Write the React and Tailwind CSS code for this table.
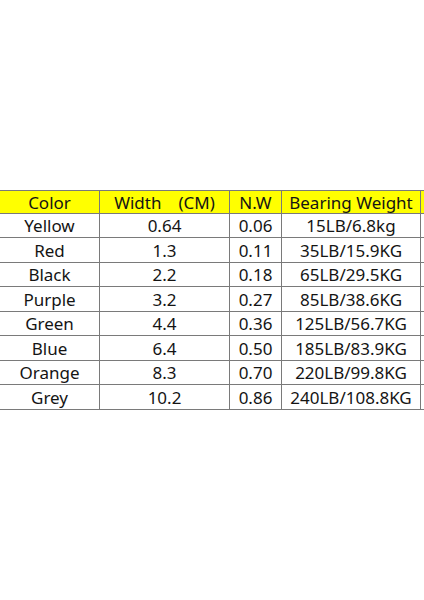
export default function App() {
  const rows = [
    ["Yellow", "0.64", "0.06", "15LB/6.8kg"],
    ["Red", "1.3", "0.11", "35LB/15.9KG"],
    ["Black", "2.2", "0.18", "65LB/29.5KG"],
    ["Purple", "3.2", "0.27", "85LB/38.6KG"],
    ["Green", "4.4", "0.36", "125LB/56.7KG"],
    ["Blue", "6.4", "0.50", "185LB/83.9KG"],
    ["Orange", "8.3", "0.70", "220LB/99.8KG"],
    ["Grey", "10.2", "0.86", "240LB/108.8KG"],
  ];
  const cell = "border border-[#7a7a7a] p-0 text-center leading-none";

  return (
    <div
      className="h-[600px] w-[424px] overflow-hidden bg-white pt-[190px] text-[17px] text-[#141414]"
      style={{ fontFamily: '"Noto Sans", "Open Sans", sans-serif' }}
    >
      <table className="ml-[-1px] border-collapse table-fixed w-[436px]">
        <colgroup>
          <col className="w-[100px]" />
          <col className="w-[130px]" />
          <col className="w-[52px]" />
          <col className="w-[139px]" />
          <col className="w-[15px]" />
        </colgroup>
        <thead>
          <tr className="h-[23px] bg-[#ffff00]">
            <th className={cell + " font-normal"}>Color</th>
            <th className={cell + " font-normal whitespace-pre"}>Width　(CM)</th>
            <th className={cell + " font-normal"}>N.W</th>
            <th className={cell + " font-normal"}>Bearing Weight</th>
            <th className={cell + " font-normal"}></th>
          </tr>
        </thead>
        <tbody>
          {rows.map((r, i) => (
            <tr key={r[0]} className={i % 2 ? "h-[25px]" : "h-[24px]"}>
              {r.map((c, j) => (
                <td key={j} className={cell}>
                  {c}
                </td>
              ))}
              <td className={cell}></td>
            </tr>
          ))}
        </tbody>
      </table>
    </div>
  );
}
